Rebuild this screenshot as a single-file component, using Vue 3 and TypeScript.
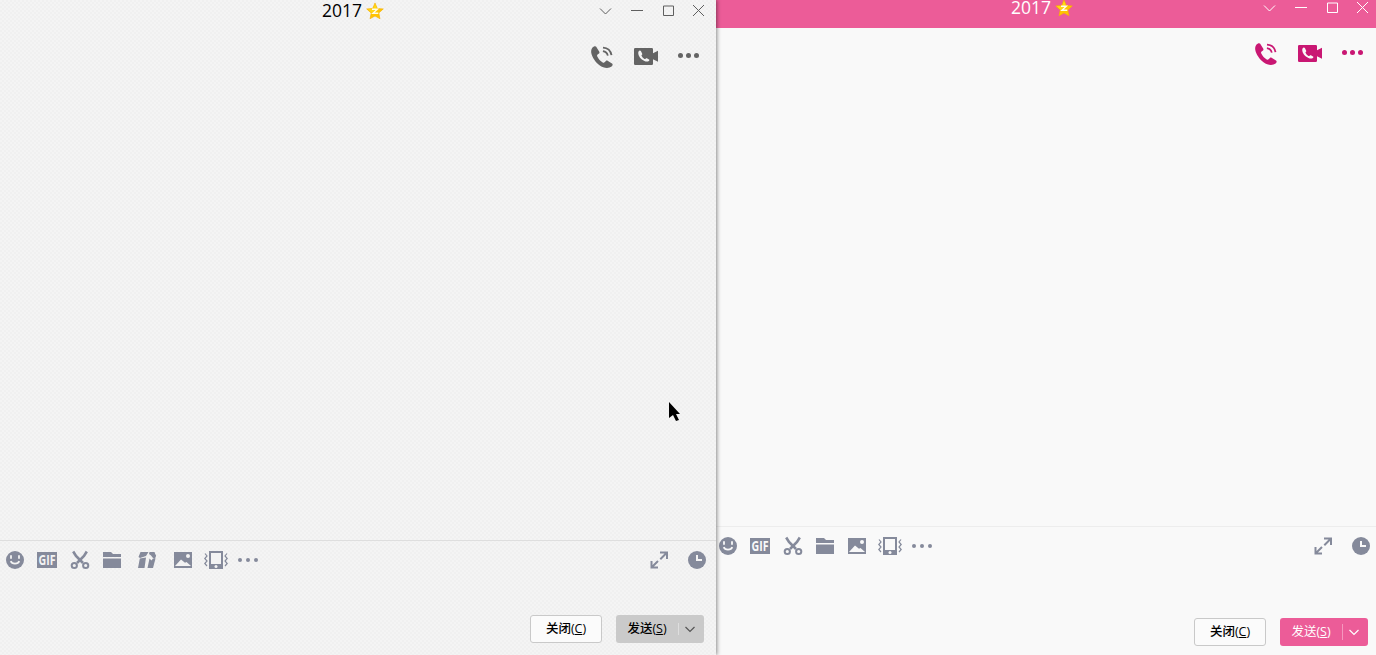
<script setup lang="ts">
interface ChatWindow {
  theme: 'classic' | 'pink'
  tools: string[]
}

const windows: ChatWindow[] = [
  { theme: 'classic', tools: ['smile', 'gif', 'scissors', 'folder', 'gift', 'image', 'shake', 'more'] },
  { theme: 'pink', tools: ['smile', 'gif', 'scissors', 'folder', 'image', 'shake', 'more'] },
]
const controls: string[] = ['chevron', 'minimize', 'maximize', 'close']
const actions: string[] = ['call', 'video', 'dots']
</script>

<template>
  <main class="desktop">
    <svg class="sprite" aria-hidden="true">
      <symbol id="chevron" viewBox="0 0 16 16"><path d="M2 5.5 7.5 11 13 5.5" fill="none" stroke="currentColor" /></symbol>
      <symbol id="minimize" viewBox="0 0 16 16"><path d="M2 7.5h12" stroke="currentColor" /></symbol>
      <symbol id="maximize" viewBox="0 0 16 16"><path d="M2.500 3h10v9.500h-10z" fill="none" stroke="currentColor" /></symbol>
      <symbol id="close" viewBox="0 0 16 16"><path d="m2 2 11 11M13 2 2 13" stroke="currentColor" /></symbol>
      <symbol id="call" viewBox="0 0 24 24">
        <g transform="translate(0 .9)">
          <path d="M3.600 1.800C1.600 3 .8 5.300 1.300 8c.8 4.300 4.200 9.200 8.200 12.300 3.300 2.500 7.200 3.300 10 2.300 1.700-.6 2.900-1.700 3.100-2.600.1-.6-.1-1-.6-1.400l-4.400-2.700c-.7-.4-1.200-.3-1.700.2l-1.300 1.300c-.6.5-1.200.5-1.900.1-2.300-1.400-4.200-3.600-5.400-6-.4-.8-.3-1.400.3-1.900L9 8.600c.5-.5.6-1 .3-1.700L6.200 1.900c-.4-.7-1.300-.8-2.600-.1z" fill="currentColor" />
          <path d="M13 2.700c4.300.2 7.700 3.200 8.500 7.600M12.900 6.300c2.500.3 4.300 1.900 4.900 4.400" fill="none" stroke="currentColor" stroke-width="1.800" />
        </g>
      </symbol>
      <symbol id="video" viewBox="0 0 24 24">
        <path d="M1.200 4H17.800Q19 4 19 5.200V9.200L24 6.700V17.800L19 15.200V19.800Q19 21 17.800 21H1.200Q0 21 0 19.800V5.200Q0 4 1.200 4z" fill="currentColor" />
        <path class="cutout" d="M4.700 7.200c-1.200 2 .1 5.800 3.200 8.300 2.500 2 5.400 2.700 7 1.400.6-.5.700-1 .1-1.400l-2.100-1.200c-.5-.3-.8-.1-1.100.2-.5.600-1 .7-1.700.3-1.200-.7-2-1.700-2.400-2.700-.3-.7-.2-1 .3-1.400.4-.3.4-.6.200-1L7 7.200c-.5-.9-1.700-.9-2.300 0z" />
      </symbol>
      <symbol id="dots" viewBox="0 0 24 24"><g fill="currentColor"><circle cx="3.500" cy="11.500" r="2.500" /><circle cx="11.500" cy="11.500" r="2.500" /><circle cx="19.500" cy="11.500" r="2.500" /></g></symbol>
      <symbol id="smile" viewBox="0 0 24 24">
        <circle cx="12" cy="12" r="9" fill="currentColor" />
        <path class="cutline smile-line" d="M8 7.200v3.600M16 7.200v3.600M7.700 13.200c1.300 3.300 7.300 3.300 8.600 0" />
      </symbol>
      <symbol id="gif" viewBox="0 0 24 24"><path d="M2 4h20v16H2z" fill="currentColor" /><text class="gif-text" x="12" y="17" text-anchor="middle" textLength="17" lengthAdjust="spacingAndGlyphs">GIF</text></symbol>
      <symbol id="scissors" viewBox="0 0 24 24">
        <g fill="none" stroke="currentColor"><path d="m5.200 3.500 2.800 4.500 7 7M18.800 3.500 16 8l-7 7" stroke-width="2.600" /><circle cx="6.300" cy="17.500" r="2.600" stroke-width="2" /><circle cx="17.700" cy="17.500" r="2.600" stroke-width="2" /></g>
      </symbol>
      <symbol id="folder" viewBox="0 0 24 24"><path d="M3 4h8l2 2h8v3H3zM3 10.500h18V20H3z" fill="currentColor" /></symbol>
      <symbol id="gift" viewBox="0 0 24 24">
        <path d="M5.500 4h8l-2.500 4-6 2-1.500-1zM15 4h4.500L21 8.500h-2zM4.800 10.500 11 9.500 9.500 20H3zM14.500 10.500l2 2 1.500-2h2.500L18 20h-5.500z" fill="currentColor" />
        <path d="M14.500 4h4l2.500 3.500-1 3.500-2-1-2-2.500-2-1.500z" fill="currentColor" />
      </symbol>
      <symbol id="image" viewBox="0 0 24 24"><path d="M3 4h18v16H3z" fill="currentColor" /><path class="cutout" d="m4 18 6-6.500 4 3.200 1.500-.7 4.500 4zM17 6a2 2 0 1 1 0 4 2 2 0 0 1 0-4z" /></symbol>
      <symbol id="shake" viewBox="0 0 24 24">
        <path d="M5 3h14v18H5z" fill="currentColor" /><path class="cutout" d="M7 5h10v11H7z" /><circle class="cutout" cx="12" cy="18.500" r="1.500" />
        <path d="M1 5.500 3 8 .8 10.500 3 13 .8 15.500 3 18M23 5.500 21 8l2.200 2.500L21 13l2.200 2.500L21 18" fill="none" stroke="currentColor" stroke-width="1.200" />
      </symbol>
      <symbol id="more" viewBox="0 0 24 24"><g fill="currentColor"><circle cx="4" cy="12" r="2" /><circle cx="12" cy="12" r="2" /><circle cx="20" cy="12" r="2" /></g></symbol>
      <symbol id="expand" viewBox="0 0 24 24"><path d="M13 4.500h7v6.500M19.500 5l-6.200 6.200M4.500 13v6.500H11M5 19l6-6" fill="none" stroke="currentColor" stroke-width="2" /></symbol>
      <symbol id="clock" viewBox="0 0 24 24"><circle cx="12" cy="12" r="9" fill="currentColor" /><path class="cutline" d="M12 7v5h5" /></symbol>
      <symbol id="star" viewBox="0 0 18 18">
        <path d="m9 .9 2.300 5.500 6 .5-4.500 4.100 1.200 5.800L9 14l-5 2.800L5.200 11 .700 6.900l6-.5z" fill="#ffc400" stroke="#f7b000" stroke-width=".6" stroke-linejoin="round" />
        <path d="M9 2 7.200 6.900 2 7.300l3.700 3.500 5-5z" fill="#ffd814" />
        <path d="M6 7.300h5.200L7 11.300h5.300" fill="none" stroke="#fffde5" stroke-width="1.500" />
      </symbol>
      <symbol id="arrow-down" viewBox="0 0 12 12"><path d="m1.500 4 4.500 4.500L10.500 4" fill="none" stroke="currentColor" stroke-width="1.200" /></symbol>
    </svg>

    <section v-for="win in windows" :key="win.theme" class="window" :class="win.theme">
      <header class="titlebar">
        <div class="title"><span>2017</span><svg class="star"><use href="#star" /></svg></div>
        <nav class="controls"><svg v-for="name in controls" :key="name" :class="name"><use :href="'#' + name" /></svg></nav>
      </header>
      <div class="actions"><svg v-for="name in actions" :key="name" class="icon" :class="name"><use :href="'#' + name" /></svg></div>
      <div class="messages"></div>
      <div class="toolbar">
        <svg v-for="name in win.tools" :key="name" class="icon" :class="name"><use :href="'#' + name" /></svg>
        <svg class="icon expand"><use href="#expand" /></svg>
        <svg class="icon clock"><use href="#clock" /></svg>
      </div>
      <div class="editor"></div>
      <footer class="buttons">
        <button class="btn dismiss">关闭(<u>C</u>)</button>
        <button class="btn send"><span class="label">发送(<u>S</u>)</span><span class="drop"><svg><use href="#arrow-down" /></svg></span></button>
      </footer>
    </section>
    <svg class="cursor" viewBox="0 0 12 20"><path d="M0 0v16l4-3 3 6 3-1-3-6h4z" /></svg>
  </main>
</template>

<style>
body { margin: 0; overflow: hidden; }
</style>

<style scoped>
.desktop { position: relative; display: flex; width: 1376px; height: 655px; overflow: hidden; background: #f9f9f9; font-family: "Open Sans", "Noto Sans CJK SC", sans-serif; }
.sprite { position: absolute; width: 0; height: 0; }
svg { display: block; flex: none; }
.window { display: flex; flex-direction: column; box-sizing: border-box; height: 655px; }
.classic { --surface: #f3f3f3; --glyph: #5f5f5f; --action: #646464; width: 716px; z-index: 1; background-color: #f0f0f0; background-image: radial-gradient(circle at 1px 1px, #f4f4f4 0.8px, transparent 1.1px), radial-gradient(circle at 3px 3px, #f4f4f4 0.8px, transparent 1.1px); background-size: 4px 4px; box-shadow: 1px 0 4px rgba(0, 0, 0, 0.45); }
.pink { --surface: #f9f9f9; --glyph: #fff; --action: #c91773; width: 660px; background: #f9f9f9; }
.titlebar { display: flex; justify-content: space-between; height: 28px; box-sizing: border-box; }
.classic .titlebar { height: 31px; padding: 3px 9px 0 322px; }
.pink .titlebar { padding: 0 5px 0 295px; background: #ec5c98; }
.title { display: flex; height: 16px; align-items: center; gap: 4px; font-size: 17.5px; line-height: 16px; color: #000; }
.pink .title { color: #fff; }
.title span { width: 40px; margin-top: -2px; }
.star { width: 18px; height: 18px; }
.controls { display: flex; color: var(--glyph); }
.controls svg { width: 16px; height: 16px; }
.minimize { margin-left: 15px; }
.maximize { margin-left: 16px; }
.close { margin-left: 14px; }
.icon { width: 24px; height: 24px; }
.cutout { fill: var(--surface); }
.cutline { fill: none; stroke: var(--surface); stroke-width: 2; }
.smile-line { stroke-width: 1.8; }
.gif-text { fill: var(--surface); font: 700 14px "Open Sans", sans-serif; }
.actions { display: flex; justify-content: flex-end; height: 24px; padding: 13px 11px 0 0; color: var(--action); }
.classic .actions { padding-right: 15px; }
.video { margin-left: 20px; }
.dots { margin-left: 19px; }
.messages { flex: 1; }
.toolbar { display: flex; align-items: center; gap: 8px; height: 38px; padding: 0 3px 0 0; border-top: 1px solid #ededed; color: #858a9b; }
.classic .toolbar { padding: 0 7px 0 3px; border-color: #dedede; }
.scissors, .shake { margin-left: 1px; }
.gift { margin: 0 4px 0 3px; }
.expand { margin-left: auto; }
.clock { margin-left: 6px; }
.editor { height: 53px; }
.classic .editor { height: 36px; }
.buttons { display: flex; justify-content: flex-end; gap: 14px; padding: 0 8px 9px 0; }
.classic .buttons { padding: 0 12px 12px 0; }
.btn { display: flex; align-items: center; justify-content: center; box-sizing: border-box; height: 28px; margin: 0; padding: 0; border: 0; border-radius: 3px; color: #000; font-family: "Open Sans", "Noto Sans CJK SC", sans-serif; font-size: 12.5px; font-weight: 500; line-height: 26px; white-space: nowrap; }
.btn u { text-underline-offset: 1px; }
.dismiss { width: 72px; border: 1px solid #c9c9c9; background: #fbfbfb; }
.send { width: 88px; background: #cacaca; }
.label { width: 62px; text-align: center; }
.drop { display: flex; align-items: center; justify-content: center; width: 26px; height: 12px; padding-right: 4px; border-left: 1px solid #dedede; box-sizing: border-box; color: #555; }
.drop svg { width: 12px; height: 12px; }
.pink .send { color: #fff; font-weight: 400; background: #ec5c98; }
.pink .drop { height: 16px; color: #fff; border-color: #f597be; }
.cursor { position: absolute; z-index: 2; left: 669px; top: 402px; width: 12px; height: 20px; }
</style>
